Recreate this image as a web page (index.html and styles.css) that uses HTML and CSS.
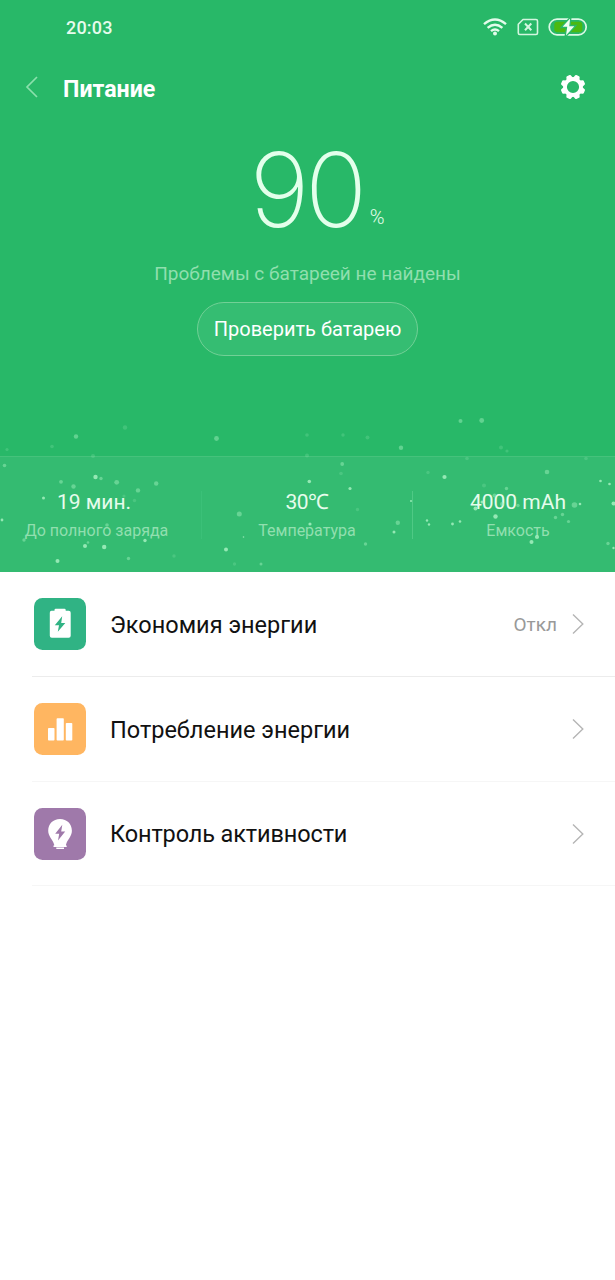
FILE: index.html
```html
<!DOCTYPE html>
<html lang="ru">
<head>
<meta charset="utf-8">
<title>Питание</title>
<link rel="stylesheet" href="styles.css">
</head>
<body>
<div class="screen">
  <section class="hero">
    <div class="status">
      <span class="time">20:03</span>
      <div class="status-icons">
        <svg width="24" height="18" viewBox="0 0 24 18" fill="none" stroke="#e2fbea" stroke-width="2.4"><path d="M1 6.200Q12-3 23 6.200M4.600 9.800Q12 3.500 19.400 9.800M8 13.200Q12 9.800 16 13.200"/><circle cx="12" cy="15.400" r="2" fill="#e2fbea" stroke="none"/></svg>
        <svg class="sim" width="22" height="18" viewBox="0 0 22 18" fill="none" stroke="#d3f6df" stroke-width="1.600"><path d="M6 1.500H19Q20.500 1.500 20.500 3V15Q20.500 16.500 19 16.500H2.800Q1.300 16.500 1.300 15V6.300Z" stroke-linejoin="round"/><path d="M8 5.500L14.300 12.200M14.300 5.500L8 12.200" stroke-width="2"/></svg>
        <svg class="battery" width="40" height="20" viewBox="0 0 40 20"><rect x="1.200" y="2.200" width="37" height="15.600" rx="7.800" fill="none" stroke="#dcf9e5" stroke-width="1.700"/><rect x="6.300" y="4.800" width="28" height="10.500" rx="3" fill="#4bb911"/><path d="M23-.5L13 10.500H18.500L17 20.500L28 8.500H22Z" fill="#f0fff2" stroke="#28b868" stroke-width="1.300"/></svg>
      </div>
    </div>
    <header class="bar">
      <svg class="back" width="14" height="24" viewBox="0 0 14 24" fill="none" stroke="#8be0ac" stroke-width="1.700"><path d="M12 2L2 12L12 22"/></svg>
      <h1>Питание</h1>
      <svg class="gear" width="26" height="26" viewBox="-13 -13 26 26"><circle r="8" fill="none" stroke="#fff" stroke-width="3.800"/><g fill="#fff"><path id="t" d="M-3.400-8.500L-2.400-11.600Q-2.100-12.300-1.400-12.300H1.400Q2.100-12.300 2.400-11.600L3.400-8.500Z" transform="rotate(22.500)"/><use href="#t" transform="rotate(45)"/><use href="#t" transform="rotate(90)"/><use href="#t" transform="rotate(135)"/><use href="#t" transform="rotate(180)"/><use href="#t" transform="rotate(225)"/><use href="#t" transform="rotate(270)"/><use href="#t" transform="rotate(315)"/></g></svg>
    </header>
    <div class="level"><span class="num">90</span><span class="pct">%</span></div>
    <p class="result">Проблемы с батареей не найдены</p>
    <button class="check"><span>Проверить батарею</span></button>
    <div class="stats">
      <div class="stat s1"><b>19 мин.</b><span>До полного заряда</span></div>
      <i class="sep faint"></i>
      <div class="stat s2"><b class="temp">30℃</b><span>Температура</span></div>
      <i class="sep"></i>
      <div class="stat s3"><b>4000 mAh</b><span>Емкость</span></div>
    </div>
    <svg class="sparks" width="615" height="167" viewBox="0 405 615 167">
      <g fill="#9aedb8" opacity=".22">
        <circle cx="125" cy="427.500" r="2.200"/><circle cx="52" cy="446.500" r="1.800"/><circle cx="7" cy="449.500" r="1.600"/><circle cx="93" cy="456" r="2"/><circle cx="307" cy="435" r="1.800"/><circle cx="343" cy="435" r="1.700"/><circle cx="367.500" cy="437.500" r="2"/><circle cx="307" cy="455.500" r="2"/><circle cx="501" cy="447.500" r="2"/><circle cx="507" cy="451" r="1.600"/><circle cx="467" cy="458.500" r="1.800"/><circle cx="586" cy="458.500" r="1.800"/><circle cx="428" cy="472.500" r="1.700"/><circle cx="484" cy="485.500" r="2"/><circle cx="341" cy="473.500" r="1.800"/><circle cx="357.500" cy="509.500" r="1.700"/><circle cx="234.500" cy="564" r="1.700"/><circle cx="174" cy="556" r="1.700"/><circle cx="134.500" cy="500.500" r="1.700"/><circle cx="124" cy="496" r="1.600"/>
      </g>
      <g fill="#9aedb8" opacity=".5">
        <circle cx="76" cy="436.500" r="2.200"/><circle cx="216.500" cy="438.500" r="2.400"/><circle cx="401" cy="447.800" r="2.200"/><circle cx="460.500" cy="421" r="2"/><circle cx="481.700" cy="420.500" r="2.400"/><circle cx="4.500" cy="465.500" r="1.800"/><circle cx="61" cy="481.800" r="1.900"/><circle cx="73.500" cy="486.500" r="2.200"/><circle cx="101" cy="478.500" r="1.700"/><circle cx="116.700" cy="482.300" r="2.400"/><circle cx="138" cy="490.400" r="2.200"/><circle cx="156.200" cy="483.500" r="2.200"/><circle cx="107" cy="525" r="1.800"/><circle cx="24" cy="540" r="1.700"/><circle cx="88" cy="542.500" r="1.300"/><circle cx="128.500" cy="558.500" r="1.700"/><circle cx="239.300" cy="514" r="2.500"/><circle cx="342.200" cy="464" r="1.900"/><circle cx="397.800" cy="522.800" r="2.200"/><circle cx="365.500" cy="544" r="1.700"/><circle cx="261" cy="564" r="1.500"/><circle cx="547" cy="472" r="2.300"/><circle cx="506.500" cy="488.500" r="1.700"/><circle cx="574.500" cy="505" r="2.800"/><circle cx="562.500" cy="514.500" r="1.700"/><circle cx="555.500" cy="517.500" r="1.700"/><circle cx="568.500" cy="521.500" r="1.600"/><circle cx="608" cy="543.500" r="1.700"/><circle cx="494.500" cy="495.500" r="2"/><circle cx="502" cy="504" r="2"/><circle cx="518" cy="505.500" r="1.700"/>
      </g>
      <g fill="#adf4c5" opacity=".8">
        <circle cx="95.500" cy="477" r="2.200"/><circle cx="43.500" cy="498" r="1.500"/><circle cx="2" cy="520" r="1.400"/><circle cx="85" cy="546" r="2"/><circle cx="104.200" cy="547" r="2.200"/><circle cx="145" cy="540.500" r="1.700"/><circle cx="57.500" cy="561" r="2"/><circle cx="309.300" cy="481.500" r="1.800"/><circle cx="350" cy="488.500" r="1.600"/><circle cx="310" cy="524" r="1.600"/><circle cx="226" cy="549.500" r="2"/><circle cx="243.500" cy="537" r=".8"/><circle cx="394" cy="532" r="1.500"/><circle cx="444.500" cy="477" r="2.100"/><circle cx="600.500" cy="481" r="1.300"/><circle cx="609.500" cy="484" r="1.300"/><circle cx="580" cy="504" r="1.300"/><circle cx="613.500" cy="503.500" r="2"/><circle cx="613.500" cy="548" r="1.200"/><circle cx="427" cy="520.500" r="1.200"/><circle cx="429" cy="524.500" r="1.200"/><circle cx="452.500" cy="524" r="1.400"/><circle cx="460" cy="521.500" r="1.300"/><circle cx="495.500" cy="516.500" r="2.200"/><circle cx="482" cy="502" r="1.500"/><circle cx="475.500" cy="508.500" r="2"/><circle cx="537" cy="537" r="2.100"/><circle cx="531.500" cy="542" r="2"/><circle cx="411" cy="501" r="1"/>
      </g>
    </svg>
  </section>
  <main>
    <div class="row">
      <svg width="52" height="52" viewBox="0 0 52 52"><rect width="52" height="52" rx="8.500" fill="#30b384"/><path d="M17.500 12.800H20.500V12Q20.500 10.800 21.700 10.800H30.500Q31.700 10.800 31.700 12V12.800H34.700Q36.700 12.800 36.700 14.800V37.800Q36.700 39.800 34.700 39.800H17.800Q15.800 39.800 15.800 37.800V14.800Q15.800 12.800 17.500 12.800Z" fill="#fff"/><path d="M28.200 18.300L20.800 27.200H25L23.800 33.800L31.300 24.900H27.200Z" fill="#30b384"/></svg>
      <span class="name">Экономия энергии</span><span class="off">Откл</span>
      <svg class="go" width="14" height="22" viewBox="0 0 14 22" fill="none" stroke="#b5b5b5" stroke-width="1.400"><path d="M2 1.500L11.800 11L2 20.500"/></svg>
    </div>
    <div class="row second">
      <svg width="52" height="52" viewBox="0 0 52 52"><rect width="52" height="52" rx="8.500" fill="#ffb661"/><rect x="14" y="25" width="6.500" height="12.500" rx=".8" fill="#fff"/><rect x="22.600" y="15.300" width="7.200" height="22.200" rx=".8" fill="#fff"/><rect x="31.800" y="20" width="6.500" height="17.500" rx=".8" fill="#fff"/></svg>
      <span class="name">Потребление энергии</span>
      <svg class="go" width="14" height="22" viewBox="0 0 14 22" fill="none" stroke="#b5b5b5" stroke-width="1.400"><path d="M2 1.500L11.800 11L2 20.500"/></svg>
    </div>
    <div class="row third">
      <svg width="52" height="52" viewBox="0 0 52 52"><rect width="52" height="52" rx="8.500" fill="#9f79aa"/><path d="M26 11C19 11 14.200 16 14.200 22.800C14.200 28.500 18.800 31.500 20.200 36.700V38.200H32V36.700C33.400 31.500 37.900 28.500 37.900 22.800C37.900 16 33 11 26 11Z" fill="#fff"/><path d="M19.500 38.200H32.700M22.300 40.300H30" stroke="#fff" stroke-width="1.400"/><path d="M28.300 16.800L21.200 25.800H25.200L24 32.500L31.200 23.500H27.200Z" fill="#9f79aa"/></svg>
      <span class="name n3">Контроль активности</span>
      <svg class="go" width="14" height="22" viewBox="0 0 14 22" fill="none" stroke="#b5b5b5" stroke-width="1.400"><path d="M2 1.500L11.800 11L2 20.500"/></svg>
    </div>
  </main>
</div>
</body>
</html>
```
FILE: styles.css
```css
* { box-sizing: border-box; }
body { margin: 0; background: #fff; font-family: Roboto, "Noto Sans", sans-serif; }
.screen { width: 615px; height: 1280px; overflow: hidden; background: #fff; }
.hero { position: relative; height: 572px; background: #28b868; display: flex; flex-direction: column; align-items: center; }
.status { width: 100%; height: 56px; padding: 0 27.500px 2px 66px; display: flex; align-items: center; justify-content: space-between; }
.time { font-size: 18px; font-weight: 500; letter-spacing: .2px; color: #e6fbec; }
.status-icons { display: flex; align-items: center; }
.sim { margin-left: 10px; }
.battery { margin-left: 9px; }
.bar { width: 100%; height: 62px; padding: 0 29px 0 25px; display: flex; align-items: center; }
h1 { margin: 4px 0 0 24px; font-size: 23.200px; line-height: 30px; font-weight: 700; color: #fff; white-space: nowrap; }
.gear { margin-left: auto; }
.level { height: 130px; padding: 9px 0 0 19px; display: flex; align-items: baseline; color: #e3ffeb; }
.num { font-family: Inter, Roboto, sans-serif; font-size: 103px; line-height: 126px; font-weight: 200; letter-spacing: -4.500px; }
.pct { margin-left: 7px; padding-bottom: 2px; font-size: 20px; font-weight: 300; align-self: flex-end; line-height: 44px; margin-bottom: 7px; }
.result { margin: 12px 0 0; height: 28px; font-size: 19px; line-height: 28px; color: #90dfae; white-space: nowrap; }
.check { margin-top: 14px; width: 221px; height: 54px; padding: 0; border: 1px solid #72d096; border-radius: 27px; background: #35bd72; color: #fff; font: 400 20px/52px Roboto, sans-serif; white-space: nowrap; }
.stats { margin-top: auto; width: 100%; height: 116px; border-top: 1px solid #45c27b; background: #34bb71; display: flex; align-items: center; }
.stat { flex: 1; display: flex; flex-direction: column; align-items: center; padding-top: 4px; white-space: nowrap; }
.s1 { flex: 0 0 201px; padding-right: 13px; }
.s1 span { padding-left: 5px; }
.s2 { flex: 0 0 210px; }
.s3 { padding-left: 8px; }
.stat b { font-size: 21px; line-height: 29px; font-weight: 400; color: #e6fcec; }
.stat .temp { letter-spacing: -.5px; }
.stat span { font-size: 16px; line-height: 28px; color: #91dfaf; }
.sep { width: 1px; height: 48px; background: #4fc985; }
.sep.faint { background: #3bc078; }
.sparks { position: absolute; left: 0; top: 405px; }
main { padding-left: 32px; }
.row { height: 105px; padding: 0 30px 0 2px; border-bottom: 1px solid #ececec; display: flex; align-items: center; }
.second, .third { border-bottom-color: #f6f6f6; }
.third { height: 104px; }
.name { margin: 2px 0 0 24px; font-size: 23.500px; line-height: 32px; color: #111; white-space: nowrap; }
.n3 { margin-top: 1px; letter-spacing: -.12px; }
.off { margin-left: auto; margin-right: 14px; font-size: 19px; color: #999; }
.go { margin-left: auto; }
.off + .go { margin-left: 0; }
```
